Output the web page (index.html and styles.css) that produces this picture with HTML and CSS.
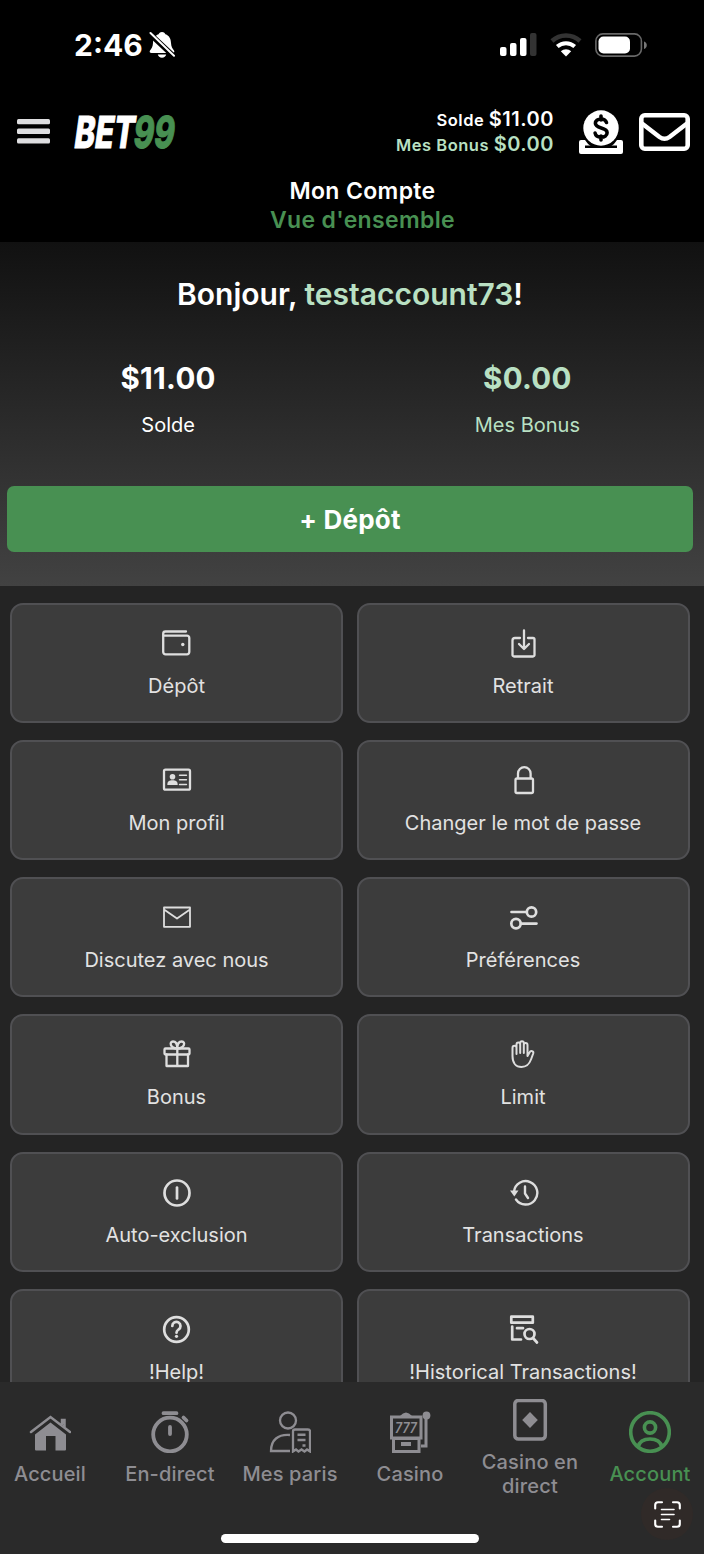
FILE: index.html
```html
<!DOCTYPE html>
<html lang="fr">
<head>
<meta charset="utf-8">
<title>Mon Compte</title>
<link rel="stylesheet" href="styles.css">
</head>
<body>
<div class="app">
  <div class="status">
    <div class="clock">
      <span class="time">2:46</span>
      <svg class="bell" width="26" height="28" viewBox="0 0 26 28"><path d="M13 1c2 0 3 1 3.400 2.300C20.500 4.700 21.800 8 22 12c.2 4 1.500 5.500 3 7.500.8 1.200.2 2.500-1.500 2.500H2.500C.8 22 .2 20.700 1 19.500c1.500-2 2.800-3.500 3-7.500.2-4 1.500-7.300 5.600-8.700C10 2 11 1 13 1zM8.800 23.500h8.400c-.4 2-2 3.200-4.200 3.200s-3.800-1.200-4.200-3.200z" fill="#fff"/><path d="M.5 2.500l24.500 23" stroke="#000" stroke-width="5.500"/><path d="M1.500 2l23.500 22.800" stroke="#fff" stroke-width="2" stroke-linecap="round"/></svg>
    </div>
    <div class="radios">
      <svg width="37" height="24" viewBox="0 0 37 24"><g fill="#fff"><rect x="0" y="14" width="6.500" height="9" rx="2"/><rect x="10" y="10" width="6.500" height="13" rx="2"/><rect x="20" y="5" width="6.500" height="18" rx="2"/></g><rect x="30" y="0" width="6.500" height="23" rx="2" fill="#333"/></svg>
      <svg width="32" height="24" viewBox="0 0 32 24"><path d="M2 8a20.500 20.500 0 0 1 28 0" fill="none" stroke="#333" stroke-width="4.500"/><path d="M7.300 13.500a13 13 0 0 1 17.400 0" fill="none" stroke="#fff" stroke-width="4"/><path d="M16 23.500l-5.200-5.300a8 8 0 0 1 10.400 0z" fill="#fff"/></svg>
      <svg width="53" height="24" viewBox="0 0 53 24"><rect x=".9" y=".9" width="45.500" height="22.200" rx="7" fill="none" stroke="#686868" stroke-width="1.600"/><rect x="3.500" y="3.500" width="31.500" height="17" rx="5" fill="#fff"/><path d="M49 8.500c3.700 1 3.700 6.500 0 7.500z" fill="#777"/></svg>
    </div>
  </div>

  <header class="topbar">
    <svg class="burger" width="33" height="25" viewBox="0 0 33 25" fill="#dedee0"><rect width="33" height="5.300" rx="1.500"/><rect y="9.600" width="33" height="5.300" rx="1.500"/><rect y="19.300" width="33" height="5.300" rx="1.500"/></svg>
    <svg class="logo" width="112" height="56" viewBox="0 -8 112 56"><g transform="skewX(-8)"><text class="logo-text" x="8" y="35.500" textLength="60" lengthAdjust="spacingAndGlyphs" fill="#fff" stroke="#fff">BET</text><text class="logo-text" x="67" y="35.500" textLength="41" lengthAdjust="spacingAndGlyphs" fill="#489052" stroke="#489052">99</text></g></svg>
    <div class="balances">
      <div class="bal">Solde <b>$11.00</b></div>
      <div class="bal mint">Mes Bonus <b>$0.00</b></div>
    </div>
    <svg class="coin" width="44" height="44" viewBox="0 0 44 44"><path d="M2 30h4q3 5 7 7h18q4-2 7-7h4q2 0 2 2v10q0 2-2 2H2q-2 0-2-2V32q0-2 2-2z" fill="#fff"/><path d="M6 35.500h32v2.500H6z" fill="#000"/><circle cx="22" cy="18" r="19" fill="#000"/><circle cx="22" cy="18" r="17.700" fill="#fff"/><path d="M27.500 12.500c-.8-2.400-3-3.500-5.500-3.500-3.300 0-5.600 1.700-5.600 4.300 0 6.200 11.700 3.200 11.700 9.400 0 2.800-2.600 4.500-6 4.500-3.200 0-5.500-1.400-6-4.200M22 6v4M22 26v4" fill="none" stroke="#000" stroke-width="3.600" stroke-linecap="round"/></svg>
    <svg width="51" height="38" viewBox="0 0 51 38"><rect x="2.300" y="2.300" width="46.400" height="33.400" rx="3.500" fill="none" stroke="#fff" stroke-width="4.600"/><path d="M3 10.500l17.500 13.500q5 3.500 10 0L48 10.500" fill="none" stroke="#fff" stroke-width="4.500"/></svg>
  </header>

  <div class="heading">
    <div class="title">Mon Compte</div>
    <div class="subtitle">Vue d'ensemble</div>
  </div>

  <section class="hero">
    <h1 class="hello">Bonjour, <span class="mint">testaccount73</span>!</h1>
    <div class="totals">
      <div class="total"><div class="amount">$11.00</div><div class="label">Solde</div></div>
      <div class="total mint"><div class="amount">$0.00</div><div class="label">Mes Bonus</div></div>
    </div>
    <div class="deposit">+ Dépôt</div>
  </section>

  <main class="grid">
    <div class="card"><svg viewBox="0 0 32 32"><path d="M26 4.500H5.500A2.300 2.300 0 0 0 3.200 6.800V25A2.300 2.300 0 0 0 5.500 27.300H27A2.300 2.300 0 0 0 29.300 25V11A2.300 2.300 0 0 0 27 8.700H4"/><circle cx="22.800" cy="17.500" r="1.700" class="fill"/></svg><span>Dépôt</span></div>
    <div class="card"><svg viewBox="0 0 32 32"><path d="M13 11H8a2.500 2.500 0 0 0-2.500 2.500V28a1.500 1.500 0 0 0 1.500 1.500H26a1.500 1.500 0 0 0 1.500-1.500V12.500a1.500 1.500 0 0 0-1.500-1.500H21M17 3.500V21.500M12 17l5 5 5-5"/></svg><span>Retrait</span></div>
    <div class="card"><svg viewBox="0 0 32 32"><rect x="4" y="5.700" width="26" height="20" rx="1.500"/><circle cx="12.500" cy="12.700" r="2.800" class="fill"/><path d="M7.300 21c0-4 2-4.800 5.200-4.800s5.200.8 5.200 4.800z" class="fill"/><path d="M19.500 11.200h7M19.500 15.800h7M19.500 20.500h7" class="thin"/></svg><span>Mon profil</span></div>
    <div class="card"><svg viewBox="0 0 32 32"><rect x="8.500" y="14.500" width="17.500" height="14.500" rx="1.500"/><path d="M11 14V9.500a6.300 6.300 0 0 1 12.600 0V14"/></svg><span>Changer le mot de passe</span></div>
    <div class="card"><svg viewBox="0 0 32 32" class="light"><path d="M4 6.500h26v19.300H4zM4 8.500l13 9 13-9"/></svg><span>Discutez avec nous</span></div>
    <div class="card"><svg viewBox="0 0 32 32" class="bold"><circle cx="24.500" cy="11" r="4.700"/><circle cx="9" cy="22.600" r="4.700"/><path d="M4.500 11h15M14 22.600H29.500"/></svg><span>Préférences</span></div>
    <div class="card"><svg viewBox="0 0 32 32"><rect x="4.500" y="10.500" width="25" height="6" rx="1"/><path d="M6.500 16.500V28H28V16.500M17.300 10.500V28M17.300 10.500C10 10.500 9 3.500 13 3.500c3 0 4.300 3 4.300 7 0-4 1.500-7 4.500-7 4 0 3 7-4.500 7z"/></svg><span>Bonus</span></div>
    <div class="card"><svg viewBox="0 0 32 32" class="light"><path d="M9.500 16V10c0-3-4-3-4 0V18c0 7 3.500 11 9 11 6 0 8-3.500 9.700-8l2-5.500c.8-2.500-2.500-3.500-3.500-1.300L20.500 18V7c0-2.800-3.700-2.800-3.700 0V15M9.500 10V6.500c0-2.800 3.700-2.800 3.700 0V15M13.200 6V5c0-2.500 3.600-2.500 3.600 0V8" stroke-width="2"/></svg><span>Limit</span></div>
    <div class="card"><svg viewBox="0 0 32 32" class="bold"><circle cx="17" cy="17" r="12.500"/><path d="M17 11.500V22.500"/></svg><span>Auto-exclusion</span></div>
    <div class="card"><svg viewBox="0 0 32 32"><path d="M7 15.500A11.700 11.700 0 1 1 9 23.500M18 10.500V17.500l3 4.500" stroke-width="2.400"/><path d="M3 14.500h8.500l-4.200 6z" class="fill"/></svg><span>Transactions</span></div>
    <div class="card"><svg viewBox="0 0 32 32" class="bold"><circle cx="16.500" cy="16.500" r="12.300"/><path d="M12.300 13a4.100 4.100 0 1 1 6.200 3.500c-1.500 1-2 1.500-2 3.200"/><circle cx="16.500" cy="23.300" r="1.600" class="fill"/></svg><span>!Help!</span></div>
    <div class="card"><svg viewBox="0 0 32 32" class="bold"><rect x="4.300" y="3.700" width="21.500" height="6" /><path d="M5.200 13.500V26.500H14M10 15.200H16"/><circle cx="22.500" cy="21" r="5"/><path d="M26 25l4 4.500"/></svg><span>!Historical Transactions!</span></div>
  </main>

  <nav class="tabs">
    <div class="tab"><svg viewBox="0 0 42 42"><path d="M2 21L21.500 6 41 21M33 13V9h2.500v7" fill="none" stroke-linecap="round"/><path d="M6 23.500L21.500 11.500 37 23.500V38.500q0 1-1 1H26.500V25H17V39.500H7q-1 0-1-1z" class="fill"/></svg><span>Accueil</span></div>
    <div class="tab"><svg viewBox="0 0 42 42"><circle cx="21" cy="23.500" r="16.800" stroke-width="3.800"/><path d="M14.500 2.200h13M21 16v7M34.500 6.500l3 3" stroke-width="3.800" stroke-linecap="round"/></svg><span>En-direct</span></div>
    <div class="tab"><svg viewBox="0 0 42 42" class="fine"><circle cx="19" cy="9.500" r="8"/><path d="M21 24C9 23 2 29 2 40H21M24 40.500V20.500q0-2 2-2h13q2 0 2 2V40.500l-3-2-2.500 2-3-2-3 2-2.500-2z"/><path d="M28.500 23.700h8M28.500 29h8M33.500 34.500h3" stroke-width="2.500"/></svg><span>Mes paris</span></div>
    <div class="tab"><svg viewBox="0 0 42 42"><rect x="2.500" y="6" width="29.500" height="21" stroke-width="3"/><path d="M4.500 27.500h25.500V40.500H4.500zM32 35h5V5" stroke-width="3"/><path d="M12 33h10" stroke-width="4"/><path d="M11 5q6-7 12 0v1H11z" class="fill"/><circle cx="37.500" cy="4.500" r="3.900" class="fill"/><text x="6" y="21.500" textLength="22" lengthAdjust="spacingAndGlyphs" class="slot">777</text></svg><span>Casino</span></div>
    <div class="tab"><svg viewBox="0 0 42 42"><rect x="5.800" y="1.500" width="30.500" height="38.500" rx="3.500" stroke-width="3.500"/><path d="M21 13l7.800 8-7.800 8-7.800-8z" class="fill"/></svg><span>Casino en<br>direct</span></div>
    <div class="tab active"><svg viewBox="0 0 42 42"><circle cx="21" cy="21" r="19.300" stroke-width="3.600"/><circle cx="21" cy="16.500" r="5.600" stroke-width="3.600"/><path d="M9 36c1.500-6 5.500-8 12-8s10.500 2 12 8" stroke-width="3.600"/></svg><span>Account</span></div>
    <div class="scan"><svg width="27" height="27" viewBox="0 0 27 27" fill="none" stroke="#fff" stroke-linecap="round"><path d="M1.200 7.500V4q0-2.800 2.800-2.800H8M19 1.200h4q2.800 0 2.800 2.800v3.500M25.800 19.500V23q0 2.800-2.800 2.800H19M8 25.800H4q-2.800 0-2.800-2.800v-3.500" stroke-width="2.100"/><path d="M7.500 8.500h12.500M7.500 13.500h12.500M7.500 18.500h8" stroke-width="1.600"/></svg></div>
    <div class="home-bar"></div>
  </nav>
</div>
</body>
</html>
```

FILE: styles.css
```css
* { box-sizing: border-box; }
body {
  margin: 0;
  background: #000;
  font-family: Inter, "Liberation Sans", sans-serif;
  color: #fff;
}
svg { display: block; flex: none; }
.app {
  display: flex;
  flex-direction: column;
  width: 704px;
  height: 1554px;
  overflow: hidden;
}
.mint { color: #b9e0c3; }

/* Status bar */
.status {
  display: flex;
  justify-content: space-between;
  flex: none;
  height: 99px;
  padding: 31px 56px 0 74px;
}
.clock { display: flex; gap: 6px; height: 28px; align-items: center; }
.time { font-size: 30px; font-weight: 700; line-height: 28px; }
.radios { display: flex; gap: 13px; padding-top: 1.500px; }

/* Top bar */
.topbar {
  display: flex;
  align-items: center;
  flex: none;
  height: 66px;
  padding: 0 14px 0 17px;
}
.burger { margin-bottom: 1px; }
.logo { margin-left: 20px; }
.logo-text {
  font-size: 44px;
  font-weight: 800;
  stroke-width: 1;
}
.balances { flex: 1; margin-right: 25px; text-align: right; }
.bal { font-size: 16.500px; font-weight: 600; line-height: 24px; letter-spacing: 0.5px; }
.bal b { font-size: 20px; font-weight: 600; }
.coin { margin-right: 16px; }

.heading {
  flex: none;
  height: 77px;
  padding: 12px 0 0 21px;
  text-align: center;
  font-size: 23px;
  font-weight: 600;
  line-height: 28.500px;
  letter-spacing: 0.350px;
}
.subtitle { color: #489052; }

/* Account summary */
.hero {
  flex: none;
  height: 344px;
  padding: 32px 11px 0 7px;
  background: linear-gradient(#111, #424242);
}
.hello {
  margin: 0;
  font-size: 30px;
  font-weight: 600;
  line-height: 40px;
  text-align: center;
}
.totals {
  display: grid;
  grid-template-columns: 1fr 1fr;
  height: 172px;
  margin: 0 -14px 0 -18.500px;
  padding-top: 44px;
  text-align: center;
}
.amount { font-size: 29.500px; font-weight: 650; line-height: 40px; letter-spacing: 0.3px; }
.label { margin-top: 12px; font-size: 20px; line-height: 30px; }
.deposit {
  height: 66px;
  border-radius: 7px;
  background: #489052;
  font-size: 26px;
  font-weight: 650;
  line-height: 67px;
  text-align: center;
  letter-spacing: 0.2px;
}

/* Action cards */
.grid {
  display: grid;
  grid-template-columns: 333px 333px;
  grid-auto-rows: 120.300px;
  gap: 17px 13.500px;
  flex: 1;
  min-height: 0;
  overflow: hidden;
  padding: 16.500px 10px 0;
  background: #242424;
}
.card {
  display: flex;
  flex-direction: column;
  align-items: center;
  padding-top: 22px;
  border: 2px solid #505053;
  border-radius: 13px;
  background: #3c3c3c;
  color: #e2e2e2;
  font-size: 20px;
  line-height: 28px;
}
.card svg {
  width: 32px;
  height: 32px;
  margin: 0 1px 13px 0;
  fill: none;
  stroke: #dedede;
  stroke-width: 2.300;
  stroke-linecap: round;
  stroke-linejoin: round;
}
.card svg.bold { stroke-width: 2.700; }
.card svg.light { stroke-width: 1.800; }
.card .thin { stroke-width: 1.400; }
.card .fill { fill: #dedede; stroke: none; }

/* Bottom navigation */
.tabs {
  position: relative;
  display: grid;
  grid-template-columns: repeat(6, 120px);
  justify-content: center;
  flex: none;
  height: 172px;
  padding-right: 4px;
  background: #2a2a2a;
}
.tab {
  display: flex;
  flex-direction: column;
  align-items: center;
  justify-content: center;
  height: 132px;
  color: #8e8d92;
  font-size: 20px;
  font-weight: 550;
  line-height: 24px;
  text-align: center;
  letter-spacing: 0.150px;
}
.tab svg {
  width: 42px;
  height: 42px;
  margin-bottom: 9px;
  fill: none;
  stroke: currentColor;
  stroke-width: 2.500;
}
.tab svg.fine { stroke-width: 2.300; }
.tab .fill { fill: currentColor; stroke: none; }
.tab .slot {
  fill: currentColor;
  stroke: none;
  font-size: 14.500px;
  font-style: italic;
  font-weight: 600;
}
.tab.active { color: #489052; }
.scan {
  position: absolute;
  right: 11px;
  bottom: 14px;
  display: grid;
  place-items: center;
  width: 52px;
  height: 52px;
  border-radius: 50%;
  background: #302a28;
}
.home-bar {
  position: absolute;
  left: 221px;
  bottom: 11px;
  width: 258px;
  height: 9px;
  border-radius: 5px;
  background: #fff;
}
```
